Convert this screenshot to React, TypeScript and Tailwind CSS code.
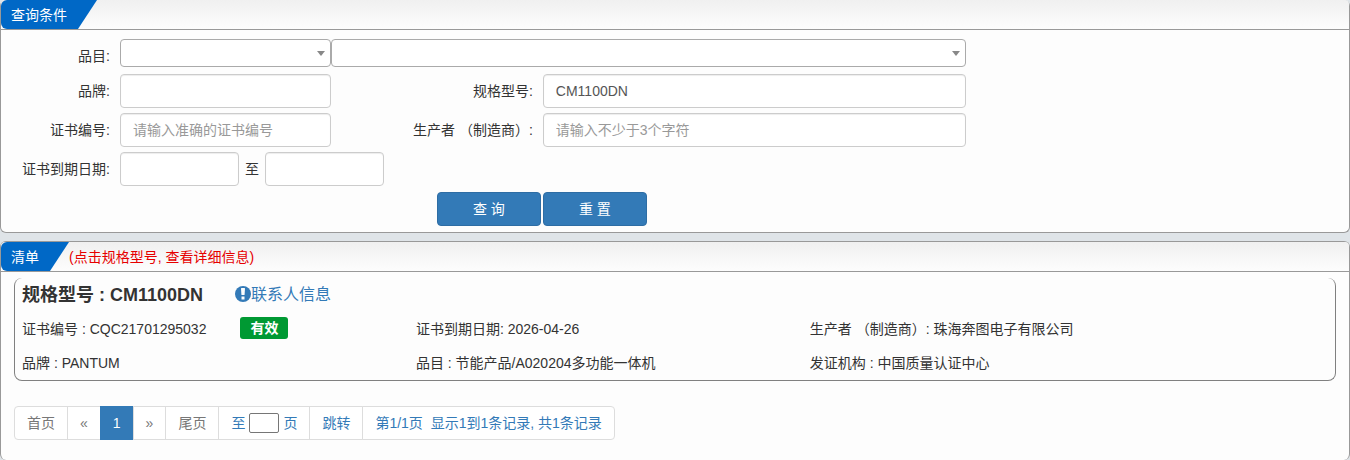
import { FC, ReactNode } from 'react';
import { clsx } from 'clsx';

const inputClass =
  'h-[34px] w-full min-w-0 rounded border border-[#ccc] bg-white px-3 text-sm text-[#555] shadow-[inset_0_1px_1px_rgba(0,0,0,0.075)] placeholder:text-[#999]';

const PanelHeader: FC<{ title: string; children?: ReactNode }> = ({ title, children }) => (
  <div className="flex h-[30px] items-stretch rounded-t border-b border-[#999] bg-linear-to-b from-[#f0f0f0] to-[#fdfdfd]">
    <h2 className="flex items-center rounded-l-md bg-[#0068c6] pl-2.5 pr-[30px] text-white [clip-path:polygon(0_0,100%_0,calc(100%-19px)_100%,0_100%)]">
      {title}
    </h2>
    {children}
  </div>
);

const Label: FC<{ htmlFor: string; className?: string; children: ReactNode }> = ({ htmlFor, className, children }) => (
  <label htmlFor={htmlFor} className={clsx('whitespace-nowrap pr-2.5 text-right', className)}>
    {children}
  </label>
);

const Select: FC<{ id: string; label?: string; className?: string }> = ({ id, label, className }) => (
  <div className={clsx('relative self-start', className)}>
    <select
      id={id}
      aria-label={label}
      className="block h-7 w-full appearance-none rounded border border-[#aaa] bg-white px-2 text-sm text-[#444]"
    >
      <option value=""></option>
    </select>
    <svg className="pointer-events-none absolute right-1.5 top-3 h-[5px] w-2" viewBox="0 0 8 5" fill="#888">
      <path d="M0 0h8L4 5z" />
    </svg>
  </div>
);

const Page: FC<{ muted?: boolean; active?: boolean; className?: string; children: ReactNode }> = ({
  muted,
  active,
  className,
  children,
}) => (
  <li>
    <a
      href="#"
      className={clsx(
        '-ml-px flex h-[34px] items-center whitespace-pre border px-3',
        active ? 'border-[#337ab7] bg-[#337ab7] text-white' : 'border-[#ddd] bg-white',
        !active && (muted ? 'text-[#777]' : 'text-[#337ab7]'),
        className,
      )}
    >
      {children}
    </a>
  </li>
);

const buttonClass = 'h-[34px] w-[104px] rounded border border-[#2e6da4] bg-[#337ab7] text-sm text-white';

export default function App() {
  return (
    <div className="flex flex-col gap-2 bg-[#dfe4e8] font-['Liberation_Sans','Noto_Sans_CJK_SC',sans-serif] text-sm leading-5 text-[#333]">
      <section className="rounded-md border border-t-0 border-[#999] bg-[#fdfdfd]">
        <PanelHeader title="查询条件" />
        <form
          className="grid grid-cols-[9fr_16fr_16fr_32fr_29fr] items-center gap-y-[5px] pb-1.5 pt-[9px]"
          onSubmit={(e) => e.preventDefault()}
        >
          <Label htmlFor="category" className="pt-1">
            品目:
          </Label>
          <div className="col-span-3 grid h-[30px] grid-cols-[1fr_3fr]">
            <Select id="category" />
            <Select id="subCategory" label="子品目" />
          </div>

          <Label htmlFor="brand" className="col-start-1">
            品牌:
          </Label>
          <input id="brand" type="text" className={inputClass} />
          <Label htmlFor="model">规格型号:</Label>
          <input id="model" type="text" defaultValue="CM1100DN" className={inputClass} />

          <Label htmlFor="certNo" className="col-start-1">
            证书编号:
          </Label>
          <input id="certNo" type="text" placeholder="请输入准确的证书编号" className={inputClass} />
          <Label htmlFor="producer">生产者 （制造商）:</Label>
          <input id="producer" type="text" placeholder="请输入不少于3个字符" className={inputClass} />

          <Label htmlFor="dateFrom" className="col-start-1">
            证书到期日期:
          </Label>
          <div className="col-span-3 flex items-center gap-1.5">
            <div className="w-[119px]">
              <input id="dateFrom" type="text" className={inputClass} />
            </div>
            <label htmlFor="dateTo">至</label>
            <div className="w-[119px]">
              <input id="dateTo" type="text" className={inputClass} />
            </div>
          </div>

          <div className="col-start-3 flex justify-end pr-0.5 pt-px">
            <button type="submit" className={buttonClass}>
              查 询
            </button>
          </div>
          <div className="flex pt-px">
            <button type="reset" className={buttonClass}>
              重 置
            </button>
          </div>
        </form>
      </section>

      <section className="rounded-md border border-b-0 border-[#999] bg-[#fdfdfd] pb-5">
        <PanelHeader title="清单">
          <p className="self-center text-[#e60000]">(点击规格型号, 查看详细信息)</p>
        </PanelHeader>

        <div className="mx-[13px] mt-1.5 grid grid-cols-[30%_30%_1fr] auto-rows-[34px] items-center rounded-lg border border-t-0 border-[#808080] pl-[7px]">
          <div className="col-span-3 flex items-center gap-8">
            <h3 className="text-lg font-bold">规格型号 : CM1100DN</h3>
            <a href="#" className="flex items-center text-base text-[#337ab7]">
              <svg className="mb-0.5 size-4" viewBox="0 0 16 16">
                <circle cx="8" cy="8" r="8" fill="#337ab7" />
                <path
                  d="M6.5 2h3q.6 0 .5.6L9.600 8.500q0 .5-.5.5H6.900q-.5 0-.5-.5L6 2.600Q6 2 6.500 2zM6.500 10.500h3V13.500h-3z"
                  fill="#fdfdfd"
                />
              </svg>
              联系人信息
            </a>
          </div>

          <div className="flex items-center gap-[34px]">
            <span>证书编号 : CQC21701295032</span>
            <span className="mb-0.5 rounded-[3px] bg-[#093] px-2.5 py-px font-bold text-white">有效</span>
          </div>
          <div>证书到期日期: 2026-04-26</div>
          <div>生产者 （制造商）: 珠海奔图电子有限公司</div>

          <div>品牌 : PANTUM</div>
          <div>品目 : 节能产品/A020204多功能一体机</div>
          <div>发证机构 : 中国质量认证中心</div>
        </div>

        <nav className="ml-3.5 mt-[25px]">
          <ul className="flex">
            <Page muted className="rounded-l">
              首页
            </Page>
            <Page muted>«</Page>
            <Page active>1</Page>
            <Page muted>»</Page>
            <Page muted>尾页</Page>
            <li className="-ml-px flex h-[34px] items-center gap-1 border border-[#ddd] bg-white px-3 text-[#337ab7]">
              <label htmlFor="pageNo">至</label>
              <input id="pageNo" type="text" className="h-5 w-[30px] rounded-[2px] border border-[#767676] bg-white px-1" />
              页
            </li>
            <Page>跳转</Page>
            <Page className="rounded-r">{'第1/1页  显示1到1条记录, 共1条记录'}</Page>
          </ul>
        </nav>
      </section>
    </div>
  );
}
